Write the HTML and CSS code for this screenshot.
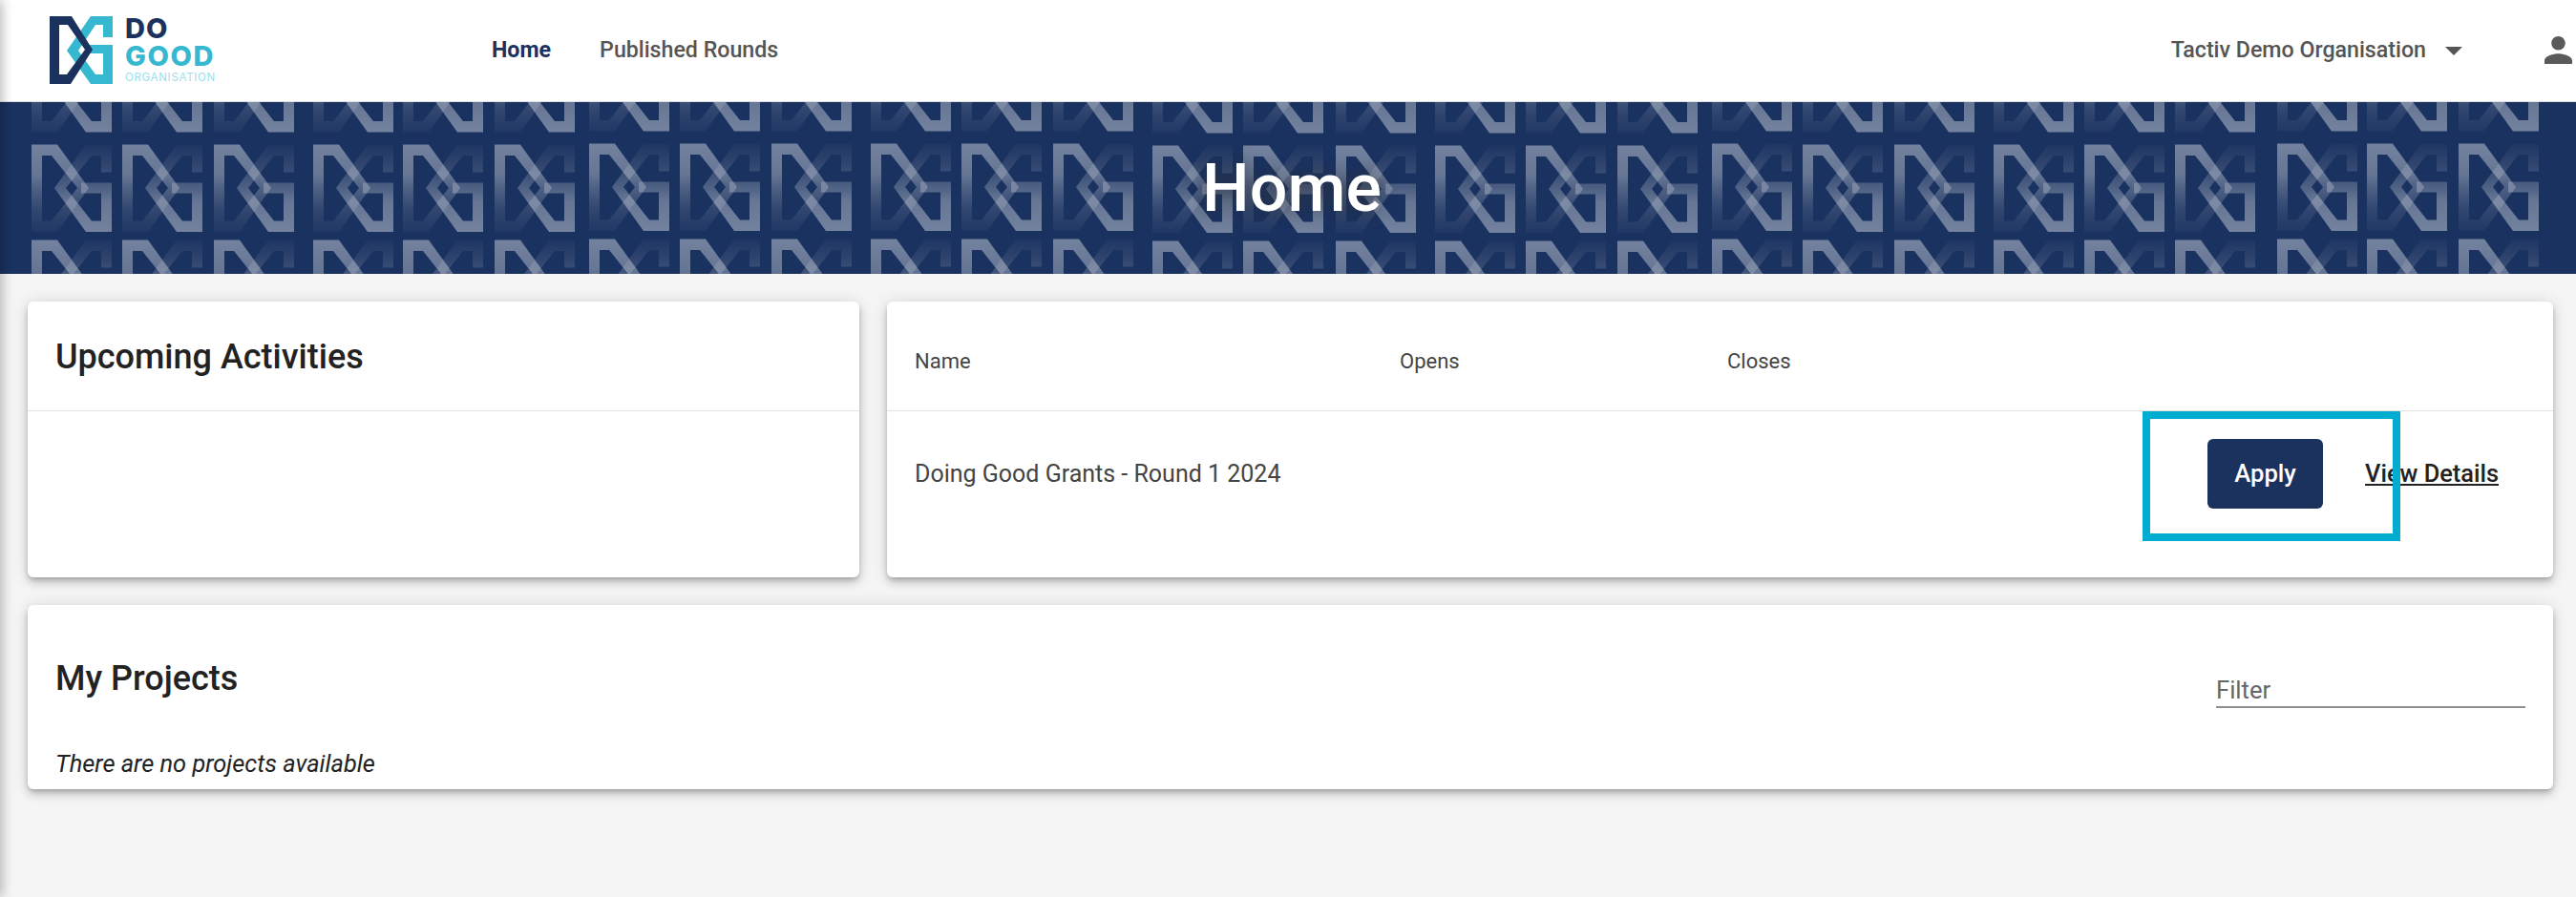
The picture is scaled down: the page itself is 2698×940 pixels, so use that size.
FILE: index.html
```html
<!DOCTYPE html>
<html lang="en">
<head>
<meta charset="utf-8">
<title>Do Good Organisation - Home</title>
<link rel="stylesheet" href="styles.css">
</head>
<body>
<header class="topbar">
  <a class="brand" href="#">
    <svg class="brand-mark" viewBox="52 15 67 73" aria-hidden="true">
      <path fill="#35b8d0" fill-rule="evenodd" d="M118 16H95L70 52l25 35h23V46H92v9h16v22h-8L82 52l18-27h8v13h10z"/>
      <path fill="#1b325e" fill-rule="evenodd" d="M52 16h23l22 35-23 36H52zM62 25v52h8l19-26-18-26z"/>
    </svg>
    <span class="brand-text">
      <span class="brand-do">DO</span>
      <span class="brand-good">GOOD</span>
      <span class="brand-org">ORGANISATION</span>
    </span>
  </a>
  <nav class="main-nav">
    <a class="nav-link active" href="#">Home</a>
    <a class="nav-link" href="#">Published Rounds</a>
  </nav>
  <div class="account">
    <span class="org-name">Tactiv Demo Organisation</span>
    <span class="caret"></span>
    <svg class="person" viewBox="4 4 16 16" aria-hidden="true">
      <path d="M12 12c2.21 0 4-1.79 4-4s-1.79-4-4-4-4 1.79-4 4 1.79 4 4 4zm0 2c-2.67 0-8 1.34-8 4v2h16v-2c0-2.66-5.33-4-8-4z"/>
    </svg>
  </div>
</header>

<section class="banner">
  <svg class="banner-art" width="2698" height="180" aria-hidden="true">
    <defs>
      <linearGradient id="fade-down" x1="0" y1="0" x2="0" y2="1">
        <stop offset="0" stop-color="#fff" stop-opacity=".39"/>
        <stop offset=".35" stop-color="#fff" stop-opacity=".33"/>
        <stop offset=".5" stop-color="#fff" stop-opacity=".23"/>
        <stop offset=".75" stop-color="#fff" stop-opacity=".1"/>
        <stop offset="1" stop-color="#fff" stop-opacity=".03"/>
      </linearGradient>
      <linearGradient id="fade-up" x1="0" y1="0" x2="0" y2="1">
        <stop offset="0" stop-color="#fff" stop-opacity=".02"/>
        <stop offset=".25" stop-color="#fff" stop-opacity=".1"/>
        <stop offset=".5" stop-color="#fff" stop-opacity=".23"/>
        <stop offset=".65" stop-color="#fff" stop-opacity=".33"/>
        <stop offset="1" stop-color="#fff" stop-opacity=".39"/>
      </linearGradient>
      <g id="tile">
        <path fill="url(#fade-up)" fill-rule="evenodd" d="M84 0H57L24 45.5 57 91.5H84V40H52V51H73V80H63L36 45.5 63 11.5H73V29H84z"/>
        <path fill="url(#fade-down)" fill-rule="evenodd" d="M0 0H27L60 45.5 27 91.5H0zM11 11.5V80H21L48 45.5 21 11.5z"/>
      </g>
      <g id="column">
        <use href="#tile" y="-60"/>
        <use href="#tile" y="44.5"/>
        <use href="#tile" y="144.5"/>
      </g>
    </defs>
    <use href="#column" x="33"/>
    <use href="#column" x="128"/>
    <use href="#column" x="224"/>
    <use href="#column" x="328"/>
    <use href="#column" x="422"/>
    <use href="#column" x="518"/>
    <use href="#column" x="617" y="-1"/>
    <use href="#column" x="712" y="-1"/>
    <use href="#column" x="808" y="-1"/>
    <use href="#column" x="912" y="-1"/>
    <use href="#column" x="1007" y="-1"/>
    <use href="#column" x="1103" y="-1"/>
    <use href="#column" x="1207" y="1"/>
    <use href="#column" x="1302" y="1"/>
    <use href="#column" x="1399" y="1"/>
    <use href="#column" x="1503" y="1"/>
    <use href="#column" x="1598" y="1"/>
    <use href="#column" x="1694" y="1"/>
    <use href="#column" x="1793" y="-1"/>
    <use href="#column" x="1888"/>
    <use href="#column" x="1984"/>
    <use href="#column" x="2088"/>
    <use href="#column" x="2183"/>
    <use href="#column" x="2278"/>
    <use href="#column" x="2385" y="-1"/>
    <use href="#column" x="2479" y="-1"/>
    <use href="#column" x="2575" y="-1"/>
  </svg>
  <h1 class="banner-title">Home</h1>
</section>

<main class="content">
  <div class="top-row">
    <section class="card activities">
      <h2 class="card-title">Upcoming Activities</h2>
    </section>
    <section class="card rounds">
      <div class="rounds-head">
        <span>Name</span>
        <span>Opens</span>
        <span>Closes</span>
      </div>
      <div class="rounds-row">
        <span class="round-name">Doing Good Grants - Round 1 2024</span>
        <div class="round-actions">
          <button class="apply-btn" type="button">Apply</button>
          <a class="details-link" href="#">View Details</a>
        </div>
      </div>
      <div class="callout"></div>
    </section>
  </div>
  <section class="card projects">
    <div class="projects-head">
      <h2 class="projects-title">My Projects</h2>
      <input class="filter" type="text" placeholder="Filter">
    </div>
    <p class="empty-note">There are no projects available</p>
  </section>
</main>
</body>
</html>
```

FILE: styles.css
```css
* { box-sizing: border-box; }

html, body {
  margin: 0;
  height: 100%;
}

body {
  background: #f5f5f5;
  color: #222;
  font-family: Roboto, "Liberation Sans", sans-serif;
  overflow: hidden;
}

body::before {
  content: "";
  position: fixed;
  top: 0;
  bottom: 0;
  left: -10px;
  width: 10px;
  box-shadow: 0 0 14px rgba(0, 0, 0, .4);
  z-index: 5;
}

/* Header */
.topbar {
  display: flex;
  align-items: center;
  height: 107px;
  background: #fff;
  border-bottom: 1px solid #ddd;
  padding: 0 4px 2px 52px;
}

.brand {
  display: flex;
  align-items: center;
  gap: 12px;
  width: 463px;
  text-decoration: none;
}

.brand-mark {
  display: block;
  width: 67px;
  height: 73px;
}

.brand-text {
  display: flex;
  flex-direction: column;
  margin-top: -1px;
  font-family: Inter, "Liberation Sans", sans-serif;
  font-weight: 800;
  line-height: 1;
}

.brand-do,
.brand-good {
  font-size: 29px;
  height: 29px;
  letter-spacing: 1px;
}

.brand-do { color: #1b325e; }
.brand-good { color: #35b8d0; letter-spacing: 1.6px; }

.brand-org {
  color: #9ce0ec;
  font-size: 11.5px;
  font-weight: 400;
  margin-top: 3px;
  letter-spacing: .7px;
}

.main-nav {
  display: flex;
  gap: 51px;
  flex: 1;
}

.nav-link {
  color: #555;
  font-size: 23.2px;
  font-weight: 500;
  text-decoration: none;
}

.nav-link.active {
  color: #1b325e;
  font-weight: 700;
}

.account {
  display: flex;
  align-items: center;
}

.org-name {
  color: #555;
  font-size: 23.2px;
  font-weight: 500;
}

.caret {
  width: 0;
  height: 0;
  margin: 3px 86px 0 20px;
  border-left: 9px solid transparent;
  border-right: 9px solid transparent;
  border-top: 9px solid #555;
}

.person {
  display: block;
  width: 29px;
  height: 29px;
  fill: #5a5a5a;
}

/* Banner */
.banner {
  position: relative;
  display: flex;
  align-items: center;
  justify-content: center;
  height: 180px;
  background: #1a3260;
  overflow: hidden;
}

.banner-art {
  position: absolute;
  left: 0;
  top: 0;
}

.banner-title {
  position: relative;
  margin: 0;
  padding-left: 8px;
  color: #fff;
  font-size: 70px;
  font-weight: 500;
  line-height: 1;
  text-shadow: 0 0 18px rgba(50, 50, 50, .75);
}

/* Content */
.content {
  display: flex;
  flex-direction: column;
  gap: 29px;
  padding: 29px 24px 0 29px;
}

.top-row {
  display: grid;
  grid-template-columns: 871px 1fr;
  gap: 29px;
}

.card {
  background: #fff;
  border-radius: 6px;
  box-shadow: 0 3px 5px -1px rgba(0, 0, 0, .2),
              0 6px 10px 0 rgba(0, 0, 0, .14),
              0 1px 18px 0 rgba(0, 0, 0, .12);
}

.activities,
.rounds { height: 289px; }

.card-title {
  display: flex;
  align-items: center;
  height: 115px;
  margin: 0;
  padding: 1px 0 0 29px;
  border-bottom: 1px solid #e2e2e2;
  font-size: 36px;
  font-weight: 500;
}

.rounds { position: relative; }

.rounds-head {
  display: grid;
  grid-template-columns: 508px 343px 1fr;
  align-items: center;
  height: 115px;
  padding: 10px 0 0 29px;
  border-bottom: 1px solid #e2e2e2;
  color: #444;
  font-size: 22px;
  font-weight: 400;
}

.rounds-row {
  display: flex;
  align-items: center;
  justify-content: space-between;
  height: 130px;
  padding: 0 57px 0 29px;
}

.round-name {
  color: #444;
  font-size: 25px;
}

.round-actions {
  display: flex;
  align-items: center;
  gap: 44px;
}

.apply-btn {
  width: 121px;
  height: 73px;
  border: 0;
  border-radius: 6px;
  background: #1b325e;
  color: #fff;
  font: 500 25.6px Roboto, "Liberation Sans", sans-serif;
}

.details-link {
  color: #222;
  font-size: 25.4px;
  font-weight: 500;
  text-decoration: underline;
}

.callout {
  position: absolute;
  top: 115px;
  right: 160px;
  width: 270px;
  height: 136px;
  border: 8px solid #00acd0;
}

.projects {
  height: 193px;
  padding: 0 29px;
}

.projects-head {
  display: flex;
  align-items: center;
  justify-content: space-between;
  height: 152px;
}

.projects-title {
  margin: 2px 0 0;
  font-size: 36px;
  font-weight: 500;
}

.filter {
  width: 324px;
  height: 40px;
  margin-top: 24px;
  padding: 4px 0 0 0;
  border: 0;
  border-bottom: 2px solid #8f8f8f;
  outline: 0;
  background: none;
  font: 400 25.6px Roboto, "Liberation Sans", sans-serif;
}

.filter::placeholder {
  color: #666;
  opacity: 1;
}

.empty-note {
  margin: 0;
  font-size: 25.4px;
  font-style: italic;
  line-height: 28px;
}
```
